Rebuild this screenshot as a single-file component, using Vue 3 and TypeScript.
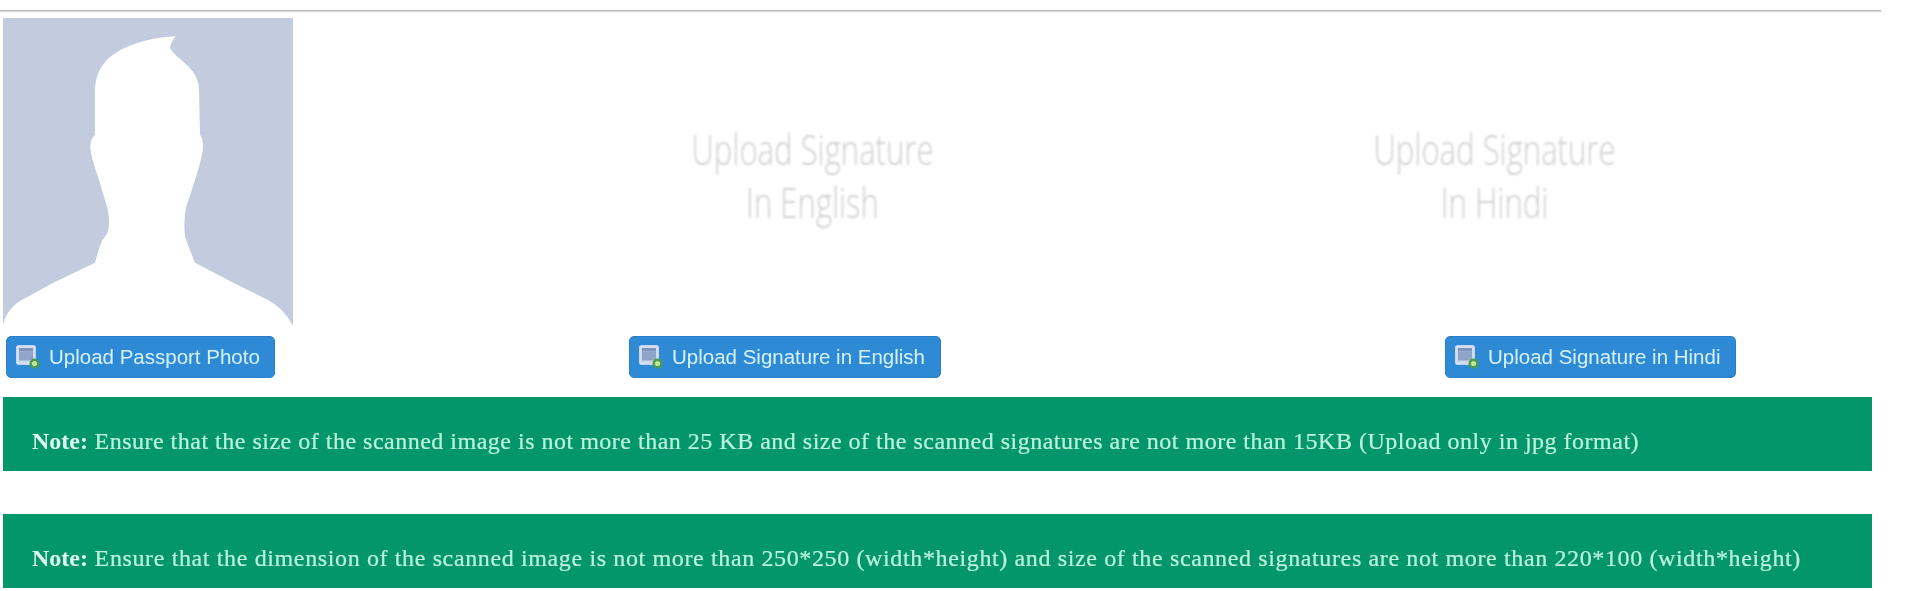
<script setup lang="ts">
interface Upload { label: string; cls: string }
const uploads: Upload[] = [
  { label: 'Upload Passport Photo', cls: 'b1' },
  { label: 'Upload Signature in English', cls: 'b2' },
  { label: 'Upload Signature in Hindi', cls: 'b3' },
]
const notes: string[] = [
  'Ensure that the size of the scanned image is not more than 25 KB and size of the scanned signatures are not more than 15KB (Upload only in jpg format)',
  'Ensure that the dimension of the scanned image is not more than 250*250 (width*height) and size of the scanned signatures are not more than 220*100 (width*height)',
]
</script>

<template>
  <main class="page">
    <div class="rule"></div>
    <section class="previews">
      <svg class="photo" viewBox="9 55 870 922" preserveAspectRatio="none" aria-label="Passport photo placeholder">
        <rect x="9" y="55" width="870" height="922" fill="#c3cbdf" />
        <path
          fill="#fff"
          d="M9 977C15 950 30 925 60 905L160 850L285 790C292 765 298 740 308 720C320 708 327 695 327 670C327 655 326 642 322 625L298 545C285 505 274 475 271 445C270 430 275 415 285 405L285 265C288 215 315 175 360 152C410 126 470 112 527 110C520 120 510 135 510 145C518 165 555 185 578 215C590 232 597 250 597 270L600 405C610 420 612 440 605 470C597 510 575 570 558 625C553 650 552 685 555 712C565 740 575 765 585 790L700 850L800 900C835 918 860 945 877 977Z"
        />
      </svg>
      <div class="sig sig-en"><span>Upload Signature<br />In English</span></div>
      <div class="sig sig-hi"><span>Upload Signature<br />In Hindi</span></div>
    </section>

    <section class="actions">
      <button v-for="u in uploads" :key="u.label" class="btn" :class="u.cls" type="button">
        <svg class="ico" viewBox="0 0 24 24" aria-hidden="true">
          <rect x="0.8" y="0.8" width="18.4" height="18.4" rx="1.5" fill="#cfd9ec" stroke="#e2e8f4" stroke-width="1.2" />
          <rect x="3" y="3" width="14" height="3.5" fill="#7f95bd" />
          <rect x="3" y="6.5" width="14" height="9" fill="#8ea4c8" />
          <circle cx="18.5" cy="18.5" r="5" fill="#4f9a52" />
          <circle cx="18.5" cy="18.5" r="2.6" fill="#c2e59c" />
        </svg>
        <span>{{ u.label }}</span>
      </button>
    </section>

    <section class="notes">
      <p v-for="n in notes" :key="n" class="note"><b>Note:</b> {{ n }}</p>
    </section>
  </main>
</template>

<style>
html, body { background: #fff; }
</style>

<style scoped>
.page {
  width: 1920px;
  height: 591px;
  overflow: hidden;
  padding-top: 10px;
  box-sizing: border-box;
}
.rule {
  height: 1px;
  width: 1881px;
  background: #b9b9b9;
  box-shadow: 0 1px 0 #d8d8d8;
}
.previews {
  display: flex;
  margin: 7px 0 0 3px;
  height: 307px;
}
.photo {
  width: 290px;
  height: 307px;
  flex: none;
  filter: blur(0.6px);
}
.sig {
  flex: none;
  width: 300px;
  text-align: center;
  font-family: "Open Sans", sans-serif;
  font-weight: 300;
  font-size: 42px;
  line-height: 53px;
  color: #cfcfcf;
  padding-top: 104px;
  filter: blur(1px);
}
.sig span {
  display: inline-block;
  transform: scaleX(0.74);
  white-space: nowrap;
}
.sig-en { margin-left: 356px; }
.sig-hi { margin-left: 382px; }
.actions {
  display: flex;
  margin: 11px 0 0 6px;
}
.btn {
  display: flex;
  align-items: center;
  gap: 9px;
  height: 42px;
  padding: 0 0 0 9px;
  box-sizing: border-box;
  border: 1px solid #2a7fc6;
  border-radius: 5px;
  background: #2f8ad6;
  color: #d6f2ff;
  font-family: "Liberation Sans", Arial, sans-serif;
  font-size: 20.5px;
  white-space: nowrap;
  filter: blur(0.4px);
}
.ico { width: 24px; height: 24px; flex: none; filter: blur(0.4px); }
.b1 { width: 269px; }
.b2 { width: 312px; margin-left: 354px; }
.b3 { width: 291px; margin-left: 504px; }
.notes {
  display: flex;
  flex-direction: column;
  gap: 43px;
  margin: 19px 0 0 3px;
  width: 1869px;
}
.note {
  margin: 0;
  height: 74px;
  box-sizing: border-box;
  padding: 29px 0 0 29px;
  background: #03966a;
  color: #bdf3de;
  font-family: "Liberation Serif", "Times New Roman", serif;
  font-size: 24px;
  line-height: 30px;
  letter-spacing: 0.5px;
  white-space: nowrap;
  -webkit-text-stroke: 0.2px #bdf3de;
  filter: blur(0.4px);
}
.note:last-child { letter-spacing: 0.63px; }
.note b { color: #dcfaee; letter-spacing: 0; -webkit-text-stroke: 0; }
</style>
